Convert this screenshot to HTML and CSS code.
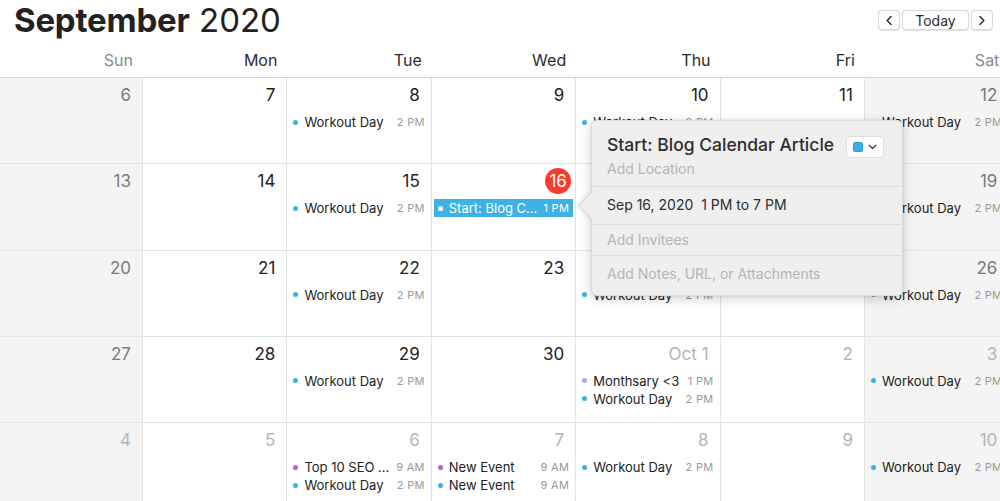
FILE: index.html
```html
<!DOCTYPE html>
<html>
<head>
<meta charset="utf-8">
<link rel="stylesheet" href="styles.css">
</head>
<body>
<div class="app">
  <header class="topbar">
    <h1 class="title"><b>September</b> 2020</h1>
    <div class="nav">
      <button class="btn btn-arrow" aria-label="Previous"><svg width="8" height="11" viewBox="0 0 8 11"><path d="M6 1.5 L2.2 5.5 L6 9.5" fill="none" stroke="#333" stroke-width="1.6" stroke-linecap="round" stroke-linejoin="round"/></svg></button>
      <button class="btn btn-today">Today</button>
      <button class="btn btn-arrow" aria-label="Next"><svg width="8" height="11" viewBox="0 0 8 11"><path d="M2 1.5 L5.8 5.5 L2 9.5" fill="none" stroke="#333" stroke-width="1.6" stroke-linecap="round" stroke-linejoin="round"/></svg></button>
    </div>
  </header>

  <div class="board">
    <div class="weekdays">
      <div class="wd wd-end">Sun</div>
      <div class="wd">Mon</div>
      <div class="wd">Tue</div>
      <div class="wd">Wed</div>
      <div class="wd">Thu</div>
      <div class="wd">Fri</div>
      <div class="wd wd-end">Sat</div>
    </div>

    <div class="month">
      <!-- row 1 -->
      <div class="cell weekend"><div class="num">6</div></div>
      <div class="cell"><div class="num">7</div></div>
      <div class="cell"><div class="num">8</div><div class="ev"><span class="dot blue"></span><span class="ev-t">Workout Day</span><span class="ev-h">2 PM</span></div></div>
      <div class="cell"><div class="num">9</div></div>
      <div class="cell"><div class="num">10</div><div class="ev"><span class="dot blue"></span><span class="ev-t">Workout Day</span><span class="ev-h">2 PM</span></div></div>
      <div class="cell"><div class="num">11</div></div>
      <div class="cell weekend"><div class="num">12</div><div class="ev"><span class="dot blue"></span><span class="ev-t">Workout Day</span><span class="ev-h">2 PM</span></div></div>
      <!-- row 2 -->
      <div class="cell weekend"><div class="num">13</div></div>
      <div class="cell"><div class="num">14</div></div>
      <div class="cell"><div class="num">15</div><div class="ev"><span class="dot blue"></span><span class="ev-t">Workout Day</span><span class="ev-h">2 PM</span></div></div>
      <div class="cell"><div class="num"><span class="today">16</span></div><div class="ev ev-sel"><span class="dot white"></span><span class="ev-t">Start: Blog Calendar Article</span><span class="ev-h">1 PM</span></div></div>
      <div class="cell"><div class="num">17</div><div class="ev"><span class="dot blue"></span><span class="ev-t">Workout Day</span><span class="ev-h">2 PM</span></div></div>
      <div class="cell"><div class="num">18</div></div>
      <div class="cell weekend"><div class="num">19</div><div class="ev"><span class="dot blue"></span><span class="ev-t">Workout Day</span><span class="ev-h">2 PM</span></div></div>
      <!-- row 3 -->
      <div class="cell weekend"><div class="num">20</div></div>
      <div class="cell"><div class="num">21</div></div>
      <div class="cell"><div class="num">22</div><div class="ev"><span class="dot blue"></span><span class="ev-t">Workout Day</span><span class="ev-h">2 PM</span></div></div>
      <div class="cell"><div class="num">23</div></div>
      <div class="cell"><div class="num">24</div><div class="ev"><span class="dot blue"></span><span class="ev-t">Workout Day</span><span class="ev-h">2 PM</span></div></div>
      <div class="cell"><div class="num">25</div></div>
      <div class="cell weekend"><div class="num">26</div><div class="ev"><span class="dot blue"></span><span class="ev-t">Workout Day</span><span class="ev-h">2 PM</span></div></div>
      <!-- row 4 -->
      <div class="cell weekend"><div class="num">27</div></div>
      <div class="cell"><div class="num">28</div></div>
      <div class="cell"><div class="num">29</div><div class="ev"><span class="dot blue"></span><span class="ev-t">Workout Day</span><span class="ev-h">2 PM</span></div></div>
      <div class="cell"><div class="num">30</div></div>
      <div class="cell other"><div class="num">Oct 1</div><div class="ev"><span class="dot lav"></span><span class="ev-t">Monthsary &lt;3</span><span class="ev-h">1 PM</span></div><div class="ev"><span class="dot blue"></span><span class="ev-t">Workout Day</span><span class="ev-h">2 PM</span></div></div>
      <div class="cell other"><div class="num">2</div></div>
      <div class="cell weekend other"><div class="num">3</div><div class="ev"><span class="dot blue"></span><span class="ev-t">Workout Day</span><span class="ev-h">2 PM</span></div></div>
      <!-- row 5 -->
      <div class="cell weekend other"><div class="num">4</div></div>
      <div class="cell other"><div class="num">5</div></div>
      <div class="cell other"><div class="num">6</div><div class="ev"><span class="dot purple"></span><span class="ev-t">Top 10 SEO Tools</span><span class="ev-h">9 AM</span></div><div class="ev"><span class="dot blue"></span><span class="ev-t">Workout Day</span><span class="ev-h">2 PM</span></div></div>
      <div class="cell other"><div class="num">7</div><div class="ev"><span class="dot purple"></span><span class="ev-t">New Event</span><span class="ev-h">9 AM</span></div><div class="ev"><span class="dot blue"></span><span class="ev-t">New Event</span><span class="ev-h">9 AM</span></div></div>
      <div class="cell other"><div class="num">8</div><div class="ev"><span class="dot blue"></span><span class="ev-t">Workout Day</span><span class="ev-h">2 PM</span></div></div>
      <div class="cell other"><div class="num">9</div></div>
      <div class="cell weekend other"><div class="num">10</div><div class="ev"><span class="dot blue"></span><span class="ev-t">Workout Day</span><span class="ev-h">2 PM</span></div></div>
    </div>
  </div>

  <div class="popover">
    <div class="pop-head">
      <div class="pop-titles">
        <div class="pop-title">Start: Blog Calendar Article</div>
        <div class="pop-muted">Add Location</div>
      </div>
      <button class="color-btn" aria-label="Calendar colour"><span class="swatch"></span><svg width="9" height="6" viewBox="0 0 9 6"><path d="M1.2 1.2 L4.5 4.4 L7.8 1.2" fill="none" stroke="#444" stroke-width="1.4" stroke-linecap="round" stroke-linejoin="round"/></svg></button>
    </div>
    <div class="pop-row pop-date">Sep 16, 2020&nbsp;&nbsp;1 PM to 7 PM</div>
    <div class="pop-row pop-muted">Add Invitees</div>
    <div class="pop-row pop-muted pop-last">Add Notes, URL, or Attachments</div>
  </div>
</div>
</body>
</html>
```

FILE: styles.css
```css
* { box-sizing: border-box; }
html, body { margin: 0; padding: 0; }
body {
  background: #fff;
  font-family: Inter, "Noto Sans", "Liberation Sans", sans-serif;
  color: #2b2b2b;
  overflow: hidden;
  width: 1000px;
  height: 501px;
}
.app { position: relative; width: 1000px; height: 501px; overflow: hidden; }

.topbar {
  height: 44px;
  display: flex;
  align-items: flex-start;
  justify-content: space-between;
  padding: 0 7px 0 14px;
}
.title {
  margin: 0;
  font-size: 33px;
  line-height: 40px;
  font-weight: 400;
  color: #222;
  letter-spacing: 0;
}
.title b { font-weight: 700; letter-spacing: -0.2px; }
.nav { display: flex; gap: 2px; margin-top: 10px; }
.btn {
  height: 20px;
  border: 1px solid #d9d9d9;
  border-radius: 4px;
  background: #fff;
  box-shadow: 0 0.5px 1px rgba(0,0,0,0.12);
  font-family: inherit;
  font-size: 14px;
  color: #2b2b2b;
  padding: 0;
  display: flex;
  align-items: center;
  justify-content: center;
}
.btn-arrow { width: 22px; }
.btn-today { width: 67px; }

.board { margin-left: -1.4px; width: 1011px; }
.weekdays, .month {
  display: grid;
  grid-template-columns: repeat(7, 144.4px);
}
.weekdays {
  height: 34px;
  border-bottom: 1px solid #d6d6d6;
}
.wd {
  text-align: right;
  padding-right: 10px;
  font-size: 16px;
  line-height: 32px;
  color: #2b2b2b;
}
.wd-end { color: #8a8a8a; }

.month { grid-auto-rows: 86.3px; }
.cell {
  border-right: 1px solid #e4e4e4;
  border-bottom: 1px solid #e4e4e4;
  padding: 4px 2px 0 2px;
  display: flex;
  flex-direction: column;
  min-width: 0;
}
.cell.weekend { background: #f4f4f4; }
.num {
  height: 26px;
  display: flex;
  justify-content: flex-end;
  align-items: center;
  padding-right: 9px;
  font-size: 17px;
  color: #222;
  margin-bottom: 5px;
}
.cell.weekend .num { color: #7a7a7a; }
.cell.other .num { color: #b4b4b4; }
.today {
  width: 26px;
  height: 26px;
  border-radius: 50%;
  background: #fa3b30;
  color: #fff;
  display: flex;
  align-items: center;
  justify-content: center;
  margin-right: -7px;
  font-size: 17px;
}

.ev {
  height: 18px;
  display: flex;
  align-items: center;
  padding: 0 4px;
  font-size: 13px;
  color: #222;
  min-width: 0;
}
.dot {
  width: 5px;
  height: 5px;
  border-radius: 50%;
  flex: none;
  margin-right: 6px;
}
.dot.blue { background: #3bb0e6; }
.dot.purple { background: #c358d8; }
.dot.lav { background: #a8addf; }
.dot.white { background: #fff; }
.ev-t {
  flex: 1;
  min-width: 0;
  white-space: nowrap;
  overflow: hidden;
  text-overflow: ellipsis;
}
.ev-h {
  flex: none;
  font-size: 11px;
  color: #9a9a9a;
  margin-left: 5px;
  letter-spacing: 0.3px;
}
.ev-sel { background: #3eb2e4; color: #fff; }
.ev-sel .ev-h { color: #fff; }

.popover {
  position: absolute;
  left: 591px;
  top: 120px;
  width: 312px;
  height: 176px;
  background: #efefef;
  border: 1px solid rgba(0,0,0,0.08);
  border-radius: 6px;
  box-shadow: 0 3px 12px rgba(0,0,0,0.18), 0 0 2px rgba(0,0,0,0.12);
}
.popover::before {
  content: "";
  position: absolute;
  left: -10px;
  top: 74px;
  width: 20px;
  height: 20px;
  background: #efefef;
  transform: rotate(45deg);
  border-left: 1px solid rgba(0,0,0,0.1);
  border-bottom: 1px solid rgba(0,0,0,0.1);
  box-shadow: -2px 2px 4px rgba(0,0,0,0.06);
}
.pop-head {
  position: relative;
  display: flex;
  justify-content: space-between;
  align-items: flex-start;
  padding: 12px 18px 0 15px;
  height: 66px;
  border-bottom: 1px solid #dcdcdc;
}
.pop-title {
  font-size: 17.5px;
  font-weight: 500;
  color: #2e2e2e;
  line-height: 24px;
}
.pop-muted { color: #b5b5b5; font-size: 14px; line-height: 20px; }
.pop-titles .pop-muted { margin-top: 2px; }
.color-btn {
  margin-top: 3px;
  width: 38px;
  height: 22px;
  border: 1px solid #dedede;
  border-radius: 4px;
  background: #fff;
  display: flex;
  align-items: center;
  justify-content: center;
  gap: 5px;
  padding: 0;
}
.swatch {
  width: 10px;
  height: 10px;
  background: #3bb0e6;
  border: 1px solid #2c9fd2;
  border-radius: 2px;
}
.pop-row {
  position: relative;
  padding: 0 15px;
  height: 31px;
  line-height: 29px;
  font-size: 14px;
  border-bottom: 1px solid #dcdcdc;
}
.pop-date { height: 38px; line-height: 36px; color: #2e2e2e; }
.pop-last { border-bottom: none; height: 40px; line-height: 35px; }
```
